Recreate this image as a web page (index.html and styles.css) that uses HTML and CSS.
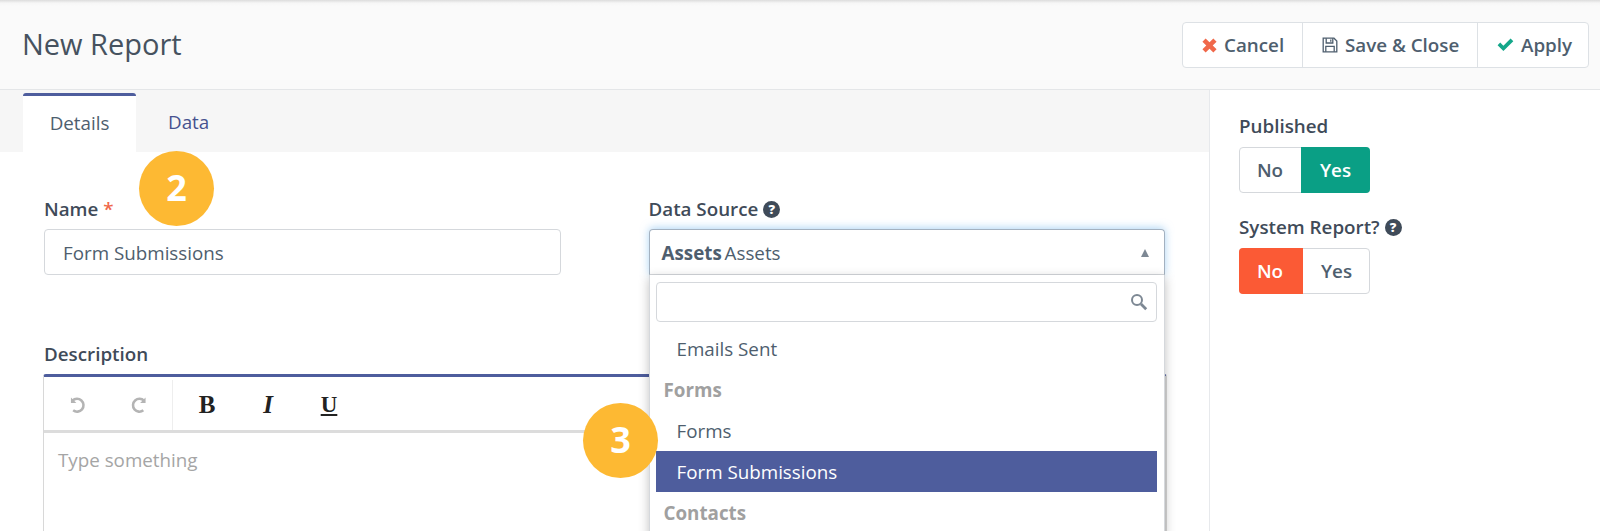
FILE: index.html
```html
<!DOCTYPE html>
<html lang="en">
<head>
<meta charset="UTF-8" />
<title>New Report</title>
<link rel="stylesheet" href="styles.css">
</head>
<body>
  <header class="page-header">
    <h1>New Report</h1>
    <div class="btn-group">
      <button class="btn">
        <svg class="icon" width="15" height="15" viewBox="0 0 14 14"><path d="M3.4 0.4 7 4 10.6 0.4 13.6 3.4 10 7 13.6 10.6 10.6 13.6 7 10 3.4 13.6 0.4 10.6 4 7 0.4 3.4Z" fill="#f0684a"/></svg>
        Cancel
      </button>
      <button class="btn">
        <svg class="icon" width="16" height="16" viewBox="0 0 16 16" fill="none" stroke="#4e5e6e" stroke-width="1.3"><path d="M1.2 1.2H12L14.8 4V14.8H1.2Z"/><path d="M4.2 1.2V6H10.8V1.2M8.8 2.4V4.8M3.8 14.8V9.4H12.2V14.8"/></svg>
        Save &amp; Close
      </button>
      <button class="btn">
        <svg class="icon" width="17" height="14" viewBox="0 0 17 14"><path d="M0.6 7.2 3.2 4.6 6.4 7.8 13.6 0.6 16.3 3.2 6.4 13.1Z" fill="#14a78a"/></svg>
        Apply
      </button>
    </div>
  </header>

  <div class="content">
    <main class="main">
      <nav class="tabs">
        <a class="tab active">Details</a>
        <a class="tab">Data</a>
      </nav>

      <form class="form">
        <div class="form-row">
          <div class="field">
            <label>Name <span class="req">*</span></label>
            <input class="input" type="text" value="Form Submissions" />
          </div>
          <div class="field">
            <label class="with-help">Data Source <span class="help">?</span></label>
            <div class="select">
              <span class="select-value"><b>Assets</b> Assets</span>
              <span class="caret"></span>
              <div class="dropdown">
                <div class="search">
                  <svg width="18" height="18" viewBox="0 0 18 18" fill="none" stroke="#7d8894"><circle cx="7" cy="7" r="5" stroke-width="2"/><path d="M11 11 16.2 16.2" stroke-width="2.8"/></svg>
                </div>
                <ul class="options">
                  <li class="option">Emails Sent</li>
                  <li class="group">Forms</li>
                  <li class="option">Forms</li>
                  <li class="option selected">Form Submissions</li>
                  <li class="group">Contacts</li>
                </ul>
              </div>
            </div>
          </div>
        </div>

        <label>Description</label>
        <div class="editor">
          <div class="toolbar">
            <div class="tool-group history">
              <svg width="20" height="20" viewBox="0 0 20 20" fill="none" stroke="#b4b4b4" stroke-width="2.6"><path d="M5.3 15.5A6.6 6.6 0 1 0 4.6 5.6"/><path d="M3 2.4V8H8.6Z" fill="#b4b4b4" stroke="none"/></svg>
              <svg width="20" height="20" viewBox="0 0 20 20" fill="none" stroke="#b4b4b4" stroke-width="2.6"><path d="M14.7 15.5A6.6 6.6 0 1 1 15.4 5.6"/><path d="M17 2.4V8H11.4Z" fill="#b4b4b4" stroke="none"/></svg>
            </div>
            <div class="tool-group format">
              <span class="tool bold">B</span>
              <span class="tool italic">I</span>
              <span class="tool under">U</span>
            </div>
          </div>
          <div class="editor-body">Type something</div>
        </div>
      </form>

      <span class="step step-2">2</span>
      <span class="step step-3">3</span>
    </main>

    <aside class="side">
      <label>Published</label>
      <div class="toggle">
        <span class="toggle-btn">No</span>
        <span class="toggle-btn on-yes">Yes</span>
      </div>
      <label class="with-help">System Report? <span class="help">?</span></label>
      <div class="toggle">
        <span class="toggle-btn on-no">No</span>
        <span class="toggle-btn">Yes</span>
      </div>
    </aside>
  </div>
</body>
</html>
```

FILE: styles.css
```css
* {
  box-sizing: border-box;
}
html, body {
  height: 531px;
  overflow: hidden;
}
body {
  margin: 0;
  font-family: 'Open Sans', sans-serif;
  font-size: 18.8px;
  color: #4e5e6e;
  background: #fff;
  display: flex;
  flex-direction: column;
}

/* header */
.page-header {
  height: 90px;
  flex: none;
  display: flex;
  align-items: center;
  justify-content: space-between;
  padding: 0 11px 0 22px;
  background: linear-gradient(#dcdcdc, #f6f6f6 3px, #fafafa 6px);
  border-bottom: 1px solid #e4e6e8;
}
h1 {
  margin: 0 0 3px;
  font-size: 29px;
  font-weight: 400;
  color: #46525f;
}
.btn-group {
  display: flex;
  height: 46px;
  margin-top: 1px;
  background: #fff;
  border: 1px solid #dde1e5;
  border-radius: 4px;
}
.btn {
  display: flex;
  align-items: center;
  gap: 7px;
  padding: 0 0 0 19px;
  font: 600 18.8px 'Open Sans', sans-serif;
  color: #4e5e6e;
  background: none;
  border: none;
  border-right: 1px solid #dde1e5;
}
.btn:nth-child(1) { width: 120px; }
.btn:nth-child(2) { width: 175px; }
.btn:last-child {
  width: 110px;
  border-right: none;
}
.icon {
  flex: none;
}

.content {
  flex: 1;
  display: flex;
  min-height: 0;
}

/* left column */
.main {
  position: relative;
  width: 1210px;
  flex: none;
  border-right: 1px solid #e7e9ec;
}
.tabs {
  height: 62px;
  display: flex;
  padding: 3px 0 0 23px;
  background: #f6f6f6;
}
.tab {
  display: flex;
  align-items: center;
  padding: 0 0 2px 32px;
  color: #46528f;
}
.tab.active {
  width: 113px;
  justify-content: center;
  padding-left: 0;
  color: #4e5e6e;
  background: #fff;
  border-top: 3px solid #4e5d9d;
  border-radius: 3px 3px 0 0;
}
.form {
  padding: 45px 44px 0;
}
.form-row {
  display: flex;
  gap: 88px;
  margin-bottom: 67px;
}
.field {
  flex: 1;
  min-width: 0;
}
label {
  display: block;
  height: 25px;
  line-height: 25px;
  margin-bottom: 7px;
  font-size: 18.8px;
  font-weight: 600;
  color: #3f4b59;
}
label.with-help {
  display: flex;
  align-items: center;
  gap: 5px;
}
.req {
  color: #f0684a;
}
.help {
  display: flex;
  align-items: center;
  justify-content: center;
  width: 17px;
  height: 17px;
  border-radius: 50%;
  font-size: 13px;
  font-weight: 800;
  line-height: 1;
  color: #fff;
  background: #3f4b59;
}
.input {
  display: block;
  width: 100%;
  height: 46px;
  padding: 1px 18px 0;
  font: 400 18.8px 'Open Sans', sans-serif;
  color: #4e5e6e;
  border: 1px solid #d5d8dc;
  border-radius: 4px;
}

/* data source select */
.select {
  position: relative;
  height: 46px;
  display: flex;
  align-items: center;
  justify-content: space-between;
  padding: 2px 15px 0 12px;
  border: 1px solid #a3b1c0;
  border-bottom-color: #d5d8dc;
  border-radius: 4px 4px 0 0;
  box-shadow: 0 -1px 8px rgba(102, 175, 233, 0.55);
}
.select-value b {
  font-weight: 700;
  margin-right: -2px;
}
.caret {
  width: 0;
  height: 0;
  border-left: 4px solid transparent;
  border-right: 4px solid transparent;
  border-bottom: 8px solid #7d8894;
}
.dropdown {
  position: absolute;
  z-index: 2;
  top: 45px;
  left: -1px;
  right: -1px;
  height: 262px;
  overflow: hidden;
  padding: 7px 7px 0 6px;
  background: #fff;
  border: 1px solid #d5d8dc;
  border-top: none;
  box-shadow: 0 3px 10px rgba(0, 0, 0, 0.25);
}
.search {
  height: 40px;
  display: flex;
  align-items: center;
  justify-content: flex-end;
  padding-right: 8px;
  margin-bottom: 7px;
  border: 1px solid #d5d8dc;
  border-radius: 4px;
}
.options {
  margin: -1px 0 0;
  padding: 0;
  list-style: none;
}
.options li {
  height: 41px;
  display: flex;
  align-items: center;
}
.option {
  padding-left: 21px;
}
.group {
  padding-left: 8px;
  font-weight: 700;
  color: #a0a0a0;
}
.option.selected {
  color: #fff;
  background: #4e5d9d;
}

/* editor */
.editor {
  height: 157px;
  margin: 0 -2px 0 -1px;
  border-top: 3px solid #4e5d9d;
  border-left: 1px solid #d8d8d8;
  border-right: 2px solid #d8d8d8;
  border-radius: 3px 3px 0 0;
}
.toolbar {
  height: 56px;
  display: flex;
  align-items: center;
  border-bottom: 3px solid #dcdcdc;
}
.tool-group {
  display: flex;
  align-items: center;
}
.history {
  height: 50px;
  padding: 0 24px;
  gap: 41px;
  border-right: 1px solid #eee;
  width: 129px;
  margin-top: 2px;
}
.format {
  padding: 2px 0 0 25px;
  gap: 43px;
}
.tool {
  width: 18px;
  text-align: center;
  font-family: 'Liberation Serif', serif;
  font-size: 25px;
  color: #222;
}
.bold { font-weight: 700; }
.italic { font-style: italic; font-weight: 700; }
.under { font-weight: 700; font-size: 23px; text-decoration: underline; }
.editor-body {
  padding: 14px 14px;
  color: #a5a5a5;
}

/* numbered callouts */
.step {
  position: absolute;
  z-index: 3;
  width: 75px;
  height: 75px;
  display: flex;
  align-items: center;
  justify-content: center;
  padding-bottom: 2px;
  border-radius: 50%;
  font-size: 36px;
  font-weight: 700;
  color: #fff;
  background: #fdb933;
}
.step-2 { left: 139px; top: 61px; }
.step-3 { left: 583px; top: 313px; }

/* right column */
.side {
  flex: 1;
  padding: 24px 0 0 29px;
}
.side label {
  margin-bottom: 8px;
}
.toggle {
  width: 131px;
  height: 46px;
  display: flex;
  margin-bottom: 22px;
  border: 1px solid #d5d8dc;
  border-radius: 4px;
}
.toggle-btn {
  flex: 1;
  display: flex;
  align-items: center;
  justify-content: center;
  font-weight: 600;
  color: #4e5e6e;
}
.toggle-btn:first-child {
  flex: none;
  width: 62px;
  margin-left: -1px;
}
.toggle-btn:last-child {
  margin-right: -1px;
}
.toggle-btn.on-yes {
  margin-top: -1px;
  margin-bottom: -1px;
  color: #fff;
  background: #0a9f85;
  border-radius: 0 4px 4px 0;
}
.toggle-btn.on-no {
  width: 64px;
  margin-top: -1px;
  margin-bottom: -1px;
  padding-right: 2px;
  color: #fff;
  background: #fb5a35;
  border-radius: 4px 0 0 4px;
}
```
